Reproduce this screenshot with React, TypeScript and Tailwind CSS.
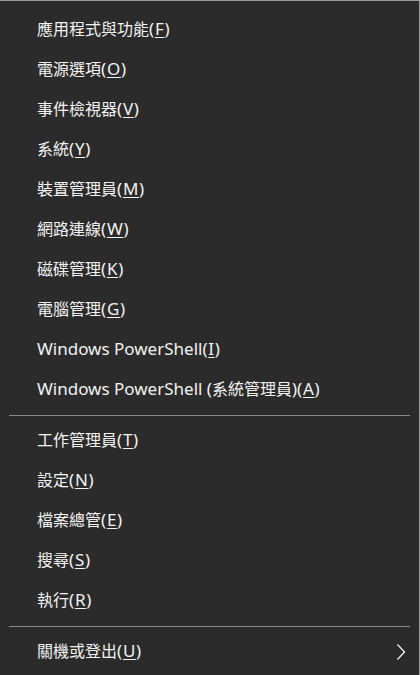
const groups: { label: string; key: string; sub?: boolean }[][] = [
  [
    { label: "應用程式與功能", key: "F" },
    { label: "電源選項", key: "O" },
    { label: "事件檢視器", key: "V" },
    { label: "系統", key: "Y" },
    { label: "裝置管理員", key: "M" },
    { label: "網路連線", key: "W" },
    { label: "磁碟管理", key: "K" },
    { label: "電腦管理", key: "G" },
    { label: "Windows PowerShell", key: "I" },
    { label: "Windows PowerShell (系統管理員)", key: "A" },
  ],
  [
    { label: "工作管理員", key: "T" },
    { label: "設定", key: "N" },
    { label: "檔案總管", key: "E" },
    { label: "搜尋", key: "S" },
    { label: "執行", key: "R" },
  ],
  [{ label: "關機或登出", key: "U", sub: true }],
];

// latin runs are set a touch larger so they take the width of Segoe UI
function Mixed({ text }: { text: string }) {
  const parts = text.split(/([\u3000-\u9fff]+)/).filter(Boolean);
  return (
    <>
      {parts.map((p, i) =>
        /[\u3000-\u9fff]/.test(p) ? (
          <span key={i}>{p}</span>
        ) : (
          <span key={i} className="text-[17px]">
            {p}
          </span>
        )
      )}
    </>
  );
}

function Row({ label, keyChar, sub }: { label: string; keyChar: string; sub?: boolean }) {
  return (
    <div className="flex h-10 items-center pb-[2px] pl-[37px] pr-3 text-[16px] text-[#f2f2f2]">
      <span className="flex-1 whitespace-nowrap">
        <Mixed text={label} />
        <span className="text-[17px] tracking-[0.75px]">
          (<span className="underline underline-offset-2">{keyChar}</span>)
        </span>
      </span>
      {sub && (
        <svg width="10" height="18" viewBox="0 0 10 18" className="mr-[1px] mt-[2px]">
          <path d="M1.5 1.5 L8.5 9 L1.5 16.5" fill="none" stroke="#f2f2f2" strokeWidth="1.3" />
        </svg>
      )}
    </div>
  );
}

export default function App() {
  return (
    <div
      className="h-[675px] w-[420px] overflow-hidden border-t border-r border-[#9a9a9a] bg-[#2b2b2b] pt-[9px]"
      style={{ fontFamily: '"Noto Sans", "Noto Sans CJK TC", sans-serif' }}
    >
      {groups.map((items, gi) => (
        <div key={gi}>
          {gi > 0 && <div className="mx-[9px] my-[5px] h-px bg-[#8a8a8a]" />}
          {items.map((it) => (
            <Row key={it.label} label={it.label} keyChar={it.key} sub={it.sub} />
          ))}
        </div>
      ))}
    </div>
  );
}
